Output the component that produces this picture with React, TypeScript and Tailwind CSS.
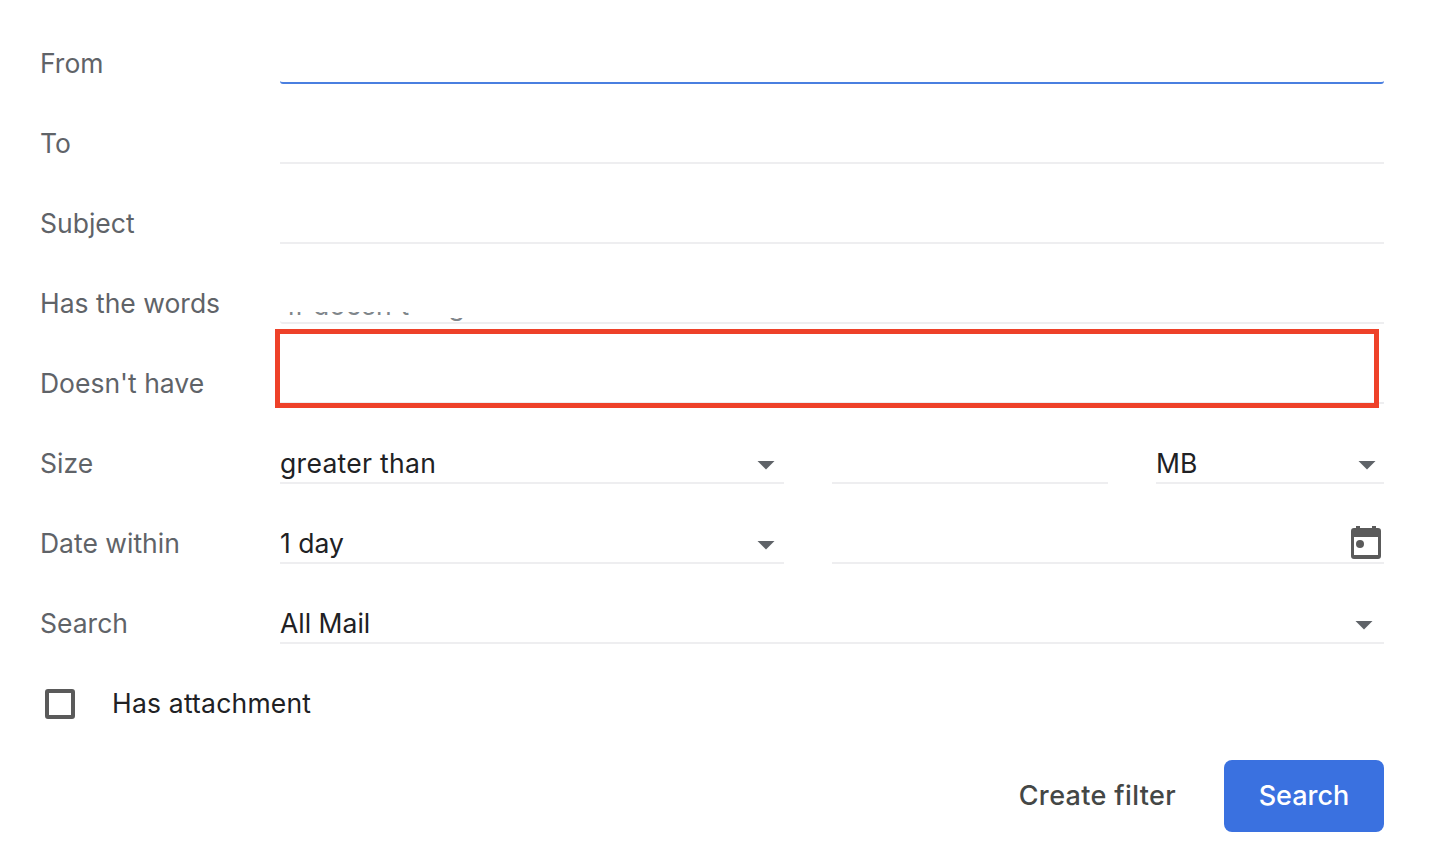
import { ReactNode } from "react";

function Caret() {
  return (
    <svg width="18" height="10" viewBox="0 0 18 10" className="mt-[5px] flex-none blur-[0.5px]">
      <path d="M0.5 1 L17.5 1 L9 9.5 Z" fill="#5f6368" />
    </svg>
  );
}

function CalendarIcon() {
  return (
    <svg width="30" height="33" viewBox="0 0 30 33" className="mt-[1px] flex-none">
      <rect x="5" y="0" width="4" height="4" fill="#5a5a5a" />
      <rect x="21" y="0" width="4" height="4" fill="#5a5a5a" />
      <path
        fillRule="evenodd"
        d="M3 2 H27 A3 3 0 0 1 30 5 V30 A3 3 0 0 1 27 33 H3 A3 3 0 0 1 0 30 V5 A3 3 0 0 1 3 2 Z M3 11 V29 H27 V11 Z"
        fill="#5a5a5a"
      />
      <circle cx="9" cy="18" r="4" fill="#5a5a5a" />
    </svg>
  );
}

function Row({ label, children }: { label: string; children?: ReactNode }) {
  return (
    <div className="flex h-20 items-end">
      <div className="w-[240px] flex-none pb-px text-[26.5px] leading-[40px] text-[#5f6368]">{label}</div>
      <div className="flex min-w-0 flex-1 gap-12">{children ?? <Field />}</div>
    </div>
  );
}

function Field({ className = "flex-1", children }: { className?: string; children?: ReactNode }) {
  return (
    <div className={`flex h-[42px] items-center justify-between border-b-2 border-[#eeeef0] text-[26.5px] text-[#202124] ${className}`}>
      {children}
    </div>
  );
}

export default function App() {
  return (
    <div className="relative h-[868px] w-[1430px] overflow-hidden bg-white font-['Inter',sans-serif]">
      <div className="flex flex-col pl-10 pr-[46px] pt-1">
        <Row label="From">
          <div className="h-[42px] flex-1 rounded-b-[3px] border-b-2 border-[#4a7fe0]" />
        </Row>
        <Row label="To" />
        <Row label="Subject" />
        <Row label="Has the words">
          <div className="flex h-[42px] flex-1 items-end rounded-bl-[3px] border-b-2 border-[#eeeef0] pl-[8px] text-[26.5px] leading-[36px] text-[#80868b]">
            <div className="mb-[5px] h-[5px] overflow-hidden">
              <div className="mt-[-25px] whitespace-nowrap tracking-[0.4px]">if doesn't</div>
            </div>
            <div className="ml-[39px] h-[4px] overflow-hidden">
              <div className="mt-[-31px]">g</div>
            </div>
          </div>
        </Row>
        <Row label="Doesn't have" />
        <Row label="Size">
          <Field className="w-[504px] flex-none pr-[9px]">
            <span className="mt-1 tracking-[0.3px]">greater than</span>
            <Caret />
          </Field>
          <Field className="w-[276px] flex-none" />
          <Field className="flex-1 pr-[8px]">
            <span className="mt-1">MB</span>
            <Caret />
          </Field>
        </Row>
        <Row label="Date within">
          <Field className="w-[504px] flex-none pr-[9px]">
            <span className="mt-1">1 day</span>
            <Caret />
          </Field>
          <Field className="flex-1 justify-end pr-[3px]">
            <CalendarIcon />
          </Field>
        </Row>
        <Row label="Search">
          <Field className="flex-1 pr-[11px]">
            <span className="mt-1">All Mail</span>
            <Caret />
          </Field>
        </Row>
        <div className="flex h-20 items-end">
          <div className="mb-[5px] ml-[5px] h-[30px] w-[30px] rounded-[3px] border-[4px] border-[#5a5a5a]" />
          <span className="ml-[37px] pb-px text-[26.5px] leading-[40px] tracking-[0.2px] text-[#202124]">Has attachment</span>
        </div>
        <div className="mt-9 flex items-center justify-end gap-12">
          <button className="text-[27px] font-medium tracking-[0.35px] text-[#444746]">Create filter</button>
          <button className="h-[72px] w-40 rounded-lg bg-[#3a71e0] text-[27px] font-medium text-white">Search</button>
        </div>
      </div>
      <div className="absolute left-[275px] top-[329px] h-[79px] w-[1104px] border-[5px] border-[#ee4129]" />
    </div>
  );
}
